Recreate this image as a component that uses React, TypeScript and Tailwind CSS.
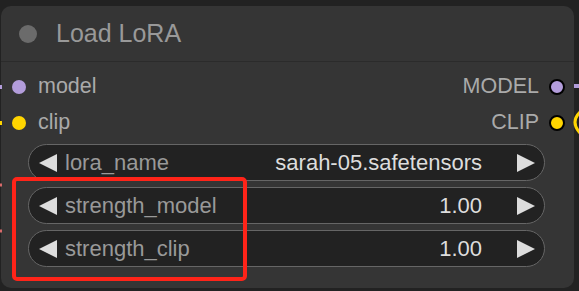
import React from 'react'

const font = { fontFamily: '"Liberation Sans", Arial, sans-serif' }

type Slot = { name: string; color: string }

const inputs: Slot[] = [
  { name: 'model', color: 'bg-[#b39ddb]' },
  { name: 'clip', color: 'bg-[#ffd500]' },
]
const outputs: Slot[] = [
  { name: 'MODEL', color: 'bg-[#b39ddb]' },
  { name: 'CLIP', color: 'bg-[#ffd500]' },
]

const widgets = [
  { label: 'lora_name', value: 'sarah-05.safetensors' },
  { label: 'strength_model', value: '1.00' },
  { label: 'strength_clip', value: '1.00' },
]

const Widget = ({ label, value }: { label: string; value: string }) => (
  <div className="h-[37px] rounded-full border-[1.5px] border-[#666] bg-[#222] flex items-center pl-[10px] pr-[9px]">
    <svg width="19" height="18" viewBox="0 0 19 18" className="shrink-0">
      <polygon points="0,9 18,0 18,18" fill="#ddd" />
    </svg>
    <span className="ml-[7px] text-[22px] text-[#999] leading-none">{label}</span>
    <span className="ml-auto text-[22px] text-[#ddd] leading-none">{value}</span>
    <svg width="19" height="18" viewBox="0 0 19 18" className="shrink-0 ml-[34px]">
      <polygon points="1,0 19,9 1,18" fill="#ddd" />
    </svg>
  </div>
)

const App = () => {
  return (
    <div className="relative w-[579px] h-[291px] bg-[#222] overflow-hidden pt-[6px] pl-[1px]" style={font}>
      <div className="w-[573px] h-[282px] rounded-[10px] bg-[#353535] flex flex-col">
        <div className="h-[56px] flex items-center border-b border-[#2b2b2b] pl-[18px]">
          <div className="w-[18px] h-[18px] rounded-full bg-[#6b6b6b]" />
          <span className="ml-[19px] text-[25px] text-[#999] leading-none">Load LoRA</span>
        </div>
        <div className="flex justify-between pt-[7px]">
          <div className="flex flex-col">
            {inputs.map((s) => (
              <div key={s.name} className="h-9 flex items-center pl-[11px]">
                <div className={`w-[14px] h-[14px] rounded-full ${s.color}`} />
                <span className="ml-[12px] text-[21.5px] text-[#aaa] leading-none">{s.name}</span>
              </div>
            ))}
          </div>
          <div className="flex flex-col items-end">
            {outputs.map((s) => (
              <div key={s.name} className="h-9 flex items-center pr-[9px]">
                <span className="text-[21.5px] text-[#aaa] leading-none">{s.name}</span>
                <div className={`ml-[10px] w-[16px] h-[16px] rounded-full border-2 border-black ${s.color}`} />
              </div>
            ))}
          </div>
        </div>
        <div className="flex flex-col gap-[6px] mt-[3px] ml-[27px] w-[517px]">
          {widgets.map((w) => (
            <Widget key={w.label} label={w.label} value={w.value} />
          ))}
        </div>
      </div>

      {/* links leaving the node */}
      <svg className="absolute inset-0 pointer-events-none" width="579" height="291">
        <line x1="0" y1="87" x2="2" y2="87" stroke="#b39ddb" strokeWidth="4" />
        <line x1="0" y1="123" x2="2" y2="123" stroke="#ffd500" strokeWidth="4" />
        <line x1="574" y1="86" x2="579" y2="86" stroke="#b39ddb" strokeWidth="4" />
        <path d="M580 112 Q570 122 580 133" stroke="#ffd500" strokeWidth="3" fill="none" />
        <line x1="0" y1="185" x2="2" y2="185" stroke="#d86a6a" strokeWidth="3" />
        <line x1="0" y1="231" x2="2" y2="231" stroke="#d86a6a" strokeWidth="3" />
      </svg>

      {/* annotation box */}
      <div className="absolute left-[12px] top-[177px] w-[235px] h-[104px] border-4 border-[#ff2419] rounded-[5px]" />
    </div>
  )
}

export default App
